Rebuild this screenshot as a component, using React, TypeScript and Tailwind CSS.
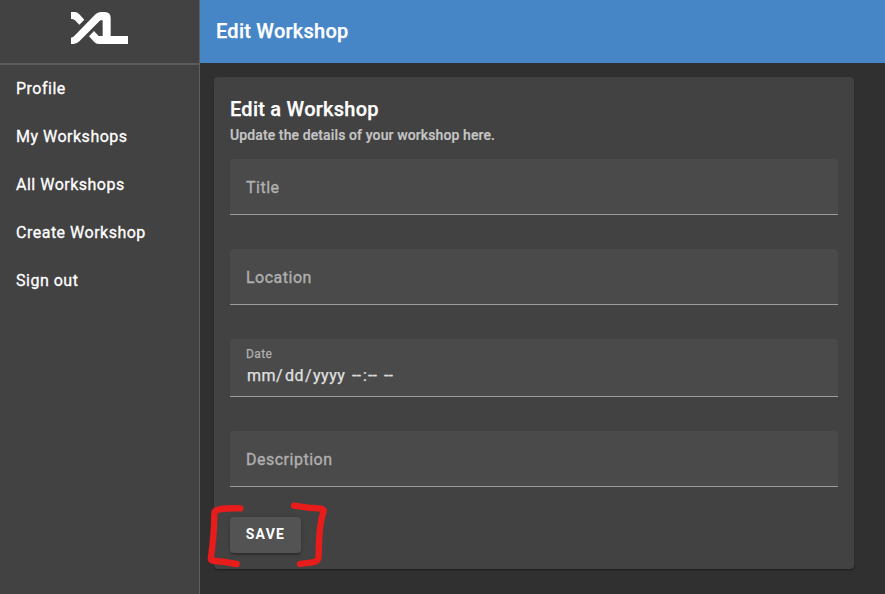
import React from 'react';

const links = ['Profile', 'My Workshops', 'All Workshops', 'Create Workshop', 'Sign out'];

function Logo() {
  return (
    <svg className="ml-[71px] mt-3 h-[33px] w-[58px]" viewBox="63 36 174 99" fill="#fff" aria-label="XL">
      <path d="M63 36h11q8 0 14 7l15 16-15 15-13-13q-4-4-12-4z" />
      <path d="M63 132v-19q5 0 9-4l60-62q10-11 22-11h10q18 0 18 18v54h52v24h-88q-8 0-14-7l-15-16 15-16 14 15h12V61h-7l-63 63q-8 8-17 8z" />
    </svg>
  );
}

function Field({ label, className = '' }: { label: string; className?: string }) {
  return (
    <label
      className={`flex h-14 items-center rounded-t border-b border-[#9c9c9c] bg-[#4a4a4a] px-4 pt-[2px] text-base font-normal tracking-[0.5px] text-[#b0b0b0] [-webkit-text-stroke:0.35px] ${className}`}
    >
      {label}
    </label>
  );
}

export default function App() {
  return (
    <div className="relative flex h-[594px] w-[885px] overflow-hidden bg-[#303030] font-['Roboto',sans-serif] text-white">
      <aside className="w-[200px] shrink-0 border-r border-[#5e5e5e] bg-[#424242]">
        <div className="h-[65px] border-b-2 border-[#5a5a5a]">
          <div className="flex">
            <Logo />
          </div>
        </div>
        <nav>
          {links.map((l) => (
            <a
              key={l}
              className="flex h-12 items-center px-4 text-base font-normal tracking-[0.5px] [-webkit-text-stroke:0.3px]"
            >
              {l}
            </a>
          ))}
        </nav>
      </aside>
      <main className="flex-1">
        <header className="flex h-[63px] items-center bg-[#4686c6] px-4 pb-px text-xl font-medium tracking-[0.25px] [-webkit-text-stroke:0.25px]">
          <h1>Edit Workshop</h1>
        </header>
        <section className="ml-[14px] mt-[14px] h-[492px] w-[640px] rounded bg-[#424242] px-4 pt-4 shadow-[0_2px_1px_-1px_rgba(0,0,0,0.2),0_1px_1px_rgba(0,0,0,0.14),0_1px_3px_rgba(0,0,0,0.12)]">
          <h2 className="text-xl leading-8 font-medium tracking-[0.25px] [-webkit-text-stroke:0.25px]">
            Edit a Workshop
          </h2>
          <p className="h-[34px] text-sm leading-[20px] font-medium tracking-[0.11px] text-[#c6c6c6] [-webkit-text-stroke:0.2px]">
            Update the details of your workshop here.
          </p>
          <Field label="Title" />
          <Field label="Location" className="mt-[34px]" />
          <div className="mt-[34px] h-[58px] rounded-t border-b border-[#9c9c9c] bg-[#4a4a4a] px-4 pt-[6px] font-normal">
            <div className="text-xs leading-[18px] tracking-[0.375px] text-[#b0b0b0] [-webkit-text-stroke:0.25px]">
              Date
            </div>
            <div className="flex pl-px text-base leading-[26px] tracking-[0.5px] text-[#e0e0e0] [-webkit-text-stroke:0.25px]">
              <span className="w-[29px]">mm</span>
              <span className="w-[9px]">/</span>
              <span className="w-[20px]">dd</span>
              <span className="w-[8px]">/</span>
              <span className="w-[39px]">yyyy</span>
              <span className="w-[11px] tracking-normal">--</span>
              <span className="w-[5px]">:</span>
              <span className="w-[16px] tracking-normal">--</span>
              <span className="tracking-normal">--</span>
            </div>
          </div>
          <Field label="Description" className="mt-[34px]" />
          <button className="mt-[30px] flex h-9 w-[71px] items-center justify-center rounded bg-[#535353] pb-[2px] text-sm font-bold tracking-[1.25px] shadow-[0_3px_1px_-2px_rgba(0,0,0,0.2),0_2px_2px_rgba(0,0,0,0.14),0_1px_5px_rgba(0,0,0,0.12)]">
            SAVE
          </button>
        </section>
      </main>
      <svg
        className="pointer-events-none absolute left-[200px] top-[490px] h-[104px] w-[150px]"
        viewBox="0 0 450 312"
        fill="none"
        stroke="#e91c1c"
        strokeWidth="19"
        strokeLinecap="round"
        strokeLinejoin="round"
      >
        <path d="M121 55C88 54 62 55 49 61Q43 64 43 73C43 120 38 165 33 202Q31 213 42 213C70 212 88 220 110 222" />
        <path d="M282 47C305 51 340 55 365 56Q374 60 370 68C356 104 357 158 356 197Q356 211 345 215C330 221 315 218 300 222" />
      </svg>
    </div>
  );
}
